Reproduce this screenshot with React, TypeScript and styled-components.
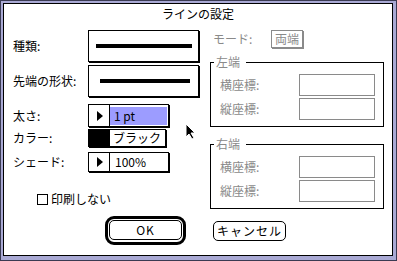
import { createGlobalStyle, styled } from 'styled-components';

const GlobalStyle = createGlobalStyle`
  html, body {
    margin: 0;
    padding: 0;
    background: #fff;
  }
  body {
    font-family: "Noto Sans CJK JP", "Noto Sans", sans-serif;
    font-size: 12px;
    color: #000;
  }
  * {
    box-sizing: border-box;
  }
`;

const GRAY = '#8a8a8a';

const Frame = styled.div`
  position: relative;
  width: 397px;
  height: 261px;
  background: #a9a9d4;
  border: 1px solid #3a3a52;
  padding: 2px 3px 4px 2px;
`;

const Inner = styled.div`
  height: 100%;
  background: #fff;
  border: 1px solid #000;
  padding-top: 3px;
  display: flex;
  flex-direction: column;
`;

const Title = styled.div`
  height: 14px;
  line-height: 14px;
  text-align: center;
`;

const Body = styled.div`
  margin-top: 9px;
  padding-left: 9px;
  display: grid;
  grid-template-columns: 197px 174px;
`;

const Column = styled.div`
  display: flex;
  flex-direction: column;
`;

const Row = styled.div<{ $top: number }>`
  display: flex;
  align-items: center;
  margin-top: ${(p) => p.$top}px;
`;

const Label = styled.div<{ $w: number; $muted?: boolean; $indent?: number }>`
  width: ${(p) => p.$w}px;
  flex: none;
  padding-left: ${(p) => p.$indent ?? 0}px;
  line-height: 14px;
  white-space: nowrap;
  color: ${(p) => (p.$muted ? GRAY : '#000')};
`;

const LineBox = styled.div<{ $inset: number; $len: number }>`
  width: 111px;
  height: 32px;
  border: 1px solid #000;
  box-shadow: 1px 1px 0 #000;
  display: flex;
  align-items: center;
  padding-left: ${(p) => p.$inset}px;

  &::before {
    content: '';
    display: block;
    width: ${(p) => p.$len}px;
    height: 4px;
    background: #000;
  }
`;

const Popup = styled.div<{ $w: number; $h: number }>`
  width: ${(p) => p.$w}px;
  height: ${(p) => p.$h}px;
  border: 1px solid #000;
  box-shadow: 1px 1px 0 #000;
  display: flex;
`;

const ArrowCell = styled.div<{ $filled?: boolean }>`
  width: 21px;
  flex: none;
  border-right: 1px solid #000;
  background: ${(p) => (p.$filled ? '#000' : '#fff')};
  display: flex;
  align-items: center;
  justify-content: center;
`;

const Triangle = styled.span`
  width: 0;
  height: 0;
  margin-left: 1px;
  border-left: 6px solid #000;
  border-top: 5.5px solid transparent;
  border-bottom: 5.5px solid transparent;
`;

const ValueCell = styled.div<{ $pad: number }>`
  flex: 1;
  display: flex;
  align-items: center;
  padding-left: ${(p) => p.$pad}px;
  line-height: 14px;
  white-space: nowrap;
`;

const SelectedCell = styled.div`
  flex: 1;
  padding: 2px 1px 1px 0;
  display: flex;
`;

const Selection = styled.div`
  flex: 1;
  background: #9c9cff;
  padding-left: 4px;
  display: flex;
  align-items: center;
  line-height: 14px;
`;

const CheckRow = styled.label`
  display: flex;
  align-items: center;
  gap: 3px;
  margin-top: 20px;
  padding-left: 24px;
  line-height: 14px;
`;

const CheckBox = styled.span`
  width: 11px;
  height: 11px;
  border: 1px solid #000;
  background: #fff;
`;

const ModeButton = styled.div`
  width: 32px;
  height: 18px;
  border: 1px solid ${GRAY};
  box-shadow: 1px 1px 0 ${GRAY};
  color: ${GRAY};
  display: flex;
  align-items: center;
  justify-content: center;
  line-height: 14px;
`;

const Group = styled.div<{ $top: number }>`
  position: relative;
  margin-top: ${(p) => p.$top}px;
  border: 1px solid #000;
  padding: 11px 7px 6px 9px;
  display: flex;
  flex-direction: column;
  gap: 2px;
`;

const Legend = styled.span`
  position: absolute;
  top: -8px;
  left: 3px;
  padding: 0 6px 0 2px;
  background: #fff;
  color: ${GRAY};
  line-height: 14px;
`;

const FieldRow = styled.div`
  display: flex;
  align-items: center;
`;

const Field = styled.div`
  width: 76px;
  height: 22px;
  border: 1px solid ${GRAY};
`;

const Footer = styled.div`
  margin-top: 7px;
  padding-left: 101px;
  display: flex;
  align-items: center;
  gap: 27px;
`;

const DefaultRing = styled.div`
  width: 81px;
  height: 29px;
  border: 3px solid #000;
  border-radius: 9px;
  padding: 1px;
  display: flex;
`;

const Button = styled.button`
  flex: 1;
  height: 20px;
  margin: 0;
  padding: 0;
  border: 1px solid #000;
  border-radius: 5px;
  background: #fff;
  font: inherit;
  line-height: 14px;
  color: #000;
  letter-spacing: 1px;
`;

const CancelButton = styled(Button)`
  flex: none;
  width: 73px;
`;

const Cursor = styled.svg`
  position: absolute;
  left: 184px;
  top: 122px;
`;

const App = () => {
  return (
    <Frame>
      <GlobalStyle />
      <Inner>
        <Title>ラインの設定</Title>
        <Body>
          <Column>
            <Row $top={0}>
              <Label $w={75}>種類:</Label>
              <LineBox $inset={7} $len={96} />
            </Row>
            <Row $top={3}>
              <Label $w={75}>先端の形状:</Label>
              <LineBox $inset={11} $len={90} />
            </Row>
            <Row $top={7}>
              <Label $w={75}>太さ:</Label>
              <Popup $w={81} $h={23}>
                <ArrowCell>
                  <Triangle />
                </ArrowCell>
                <SelectedCell>
                  <Selection>1 pt</Selection>
                </SelectedCell>
              </Popup>
            </Row>
            <Row $top={2}>
              <Label $w={75}>カラー:</Label>
              <Popup $w={78} $h={18}>
                <ArrowCell $filled />
                <ValueCell $pad={3}>ブラック</ValueCell>
              </Popup>
            </Row>
            <Row $top={5}>
              <Label $w={75}>シェード:</Label>
              <Popup $w={81} $h={20}>
                <ArrowCell>
                  <Triangle />
                </ArrowCell>
                <ValueCell $pad={5}>100%</ValueCell>
              </Popup>
            </Row>
            <CheckRow>
              <CheckBox />
              印刷しない
            </CheckRow>
          </Column>

          <Column>
            <Row $top={0}>
              <Label $w={61} $muted $indent={3}>
                モード:
              </Label>
              <ModeButton>両端</ModeButton>
            </Row>
            <Group $top={14}>
              <Legend>左端</Legend>
              <FieldRow>
                <Label $w={79} $muted>横座標:</Label>
                <Field />
              </FieldRow>
              <FieldRow>
                <Label $w={79} $muted>縦座標:</Label>
                <Field />
              </FieldRow>
            </Group>
            <Group $top={17}>
              <Legend>右端</Legend>
              <FieldRow>
                <Label $w={79} $muted>横座標:</Label>
                <Field />
              </FieldRow>
              <FieldRow>
                <Label $w={79} $muted>縦座標:</Label>
                <Field />
              </FieldRow>
            </Group>
          </Column>
        </Body>
        <Footer>
          <DefaultRing>
            <Button>OK</Button>
          </DefaultRing>
          <CancelButton>キャンセル</CancelButton>
        </Footer>
      </Inner>
      <Cursor width="11" height="17" viewBox="0 0 11 17">
        <path d="M1 1 L1 14 L4 11 L7 16 L9 15 L6 10 L10 10 Z" fill="#000" stroke="#fff" strokeWidth="1" />
      </Cursor>
    </Frame>
  );
};

export default App;
